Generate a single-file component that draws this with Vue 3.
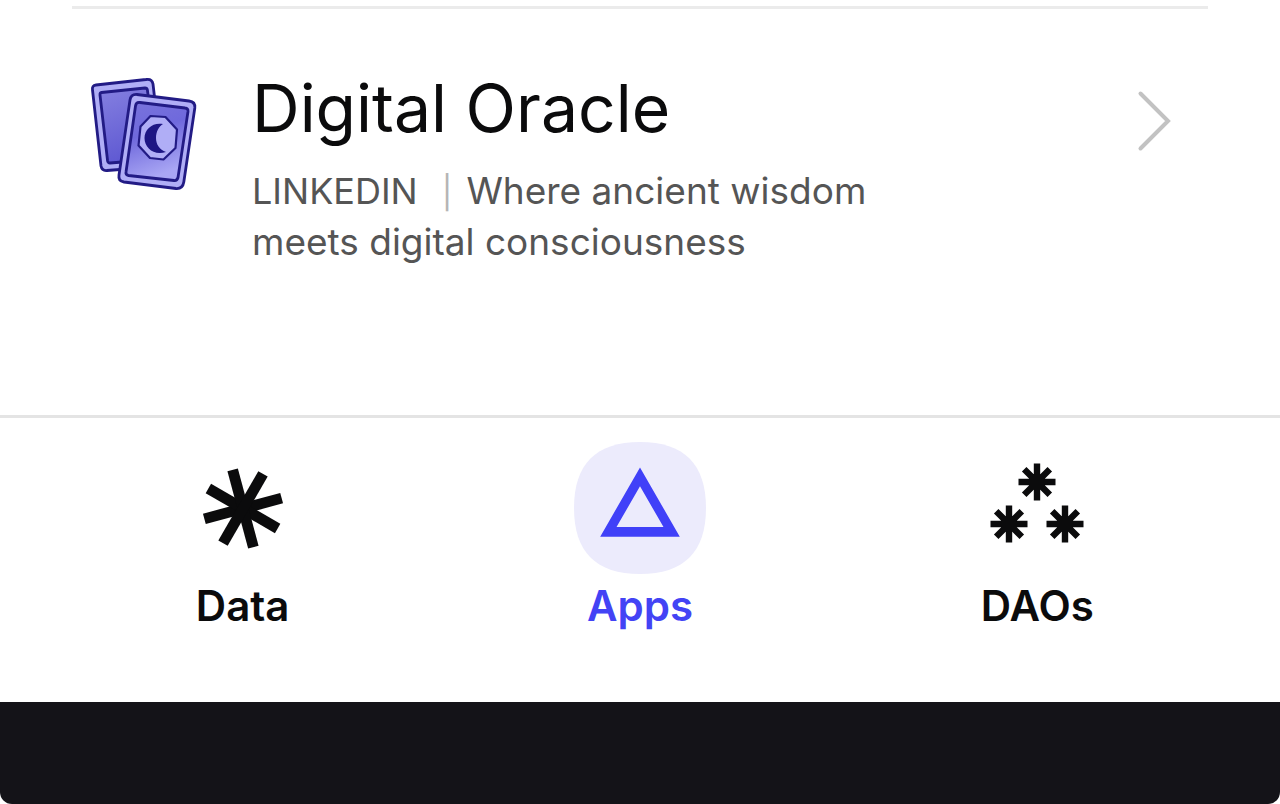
<script setup>
const tabs = [
  { id: 'data', label: 'Data' },
  { id: 'apps', label: 'Apps' },
  { id: 'daos', label: 'DAOs' },
]
const active = 'apps'
const clusters = [
  [66, 40],
  [38, 82],
  [94, 82],
]
</script>

<template>
  <div class="screen">
    <main class="list">
      <a class="app" href="#digital-oracle">
        <svg class="art" viewBox="0 0 130 130" aria-hidden="true">
          <defs>
            <linearGradient id="cardFill" x1="0" y1="0" x2="0.3" y2="1">
              <stop offset="0" stop-color="#7a74dc" />
              <stop offset="0.45" stop-color="#6f69dc" />
              <stop offset="1" stop-color="#a9a6f4" />
            </linearGradient>
            <linearGradient id="backFill" x1="0" y1="0" x2="0.3" y2="1">
              <stop offset="0" stop-color="#8580e0" />
              <stop offset="1" stop-color="#5f59d2" />
            </linearGradient>
          </defs>
          <g stroke="#221b85" stroke-width="2.8" stroke-linejoin="round">
            <path fill="#b0aef6" d="M16 15 L66 9.500 Q72 8.600 73 14 L82 92 Q82.400 96 78.500 96.500 L27 100.500 Q22 101 21 96 L12.500 20 Q11.800 15.500 16 15Z" />
            <path fill="url(#backFill)" d="M21.500 22.500 L65 18 Q67 18 67.400 20 L76 87 Q76 89 74 89.500 L30 93 Q28 93 27.600 91 L20 25 Q19.800 22.800 21.500 22.500Z" />
            <path fill="#b0aef6" d="M57 24.500 L109 31 Q115.500 31.800 114.800 38 L103.800 112 Q102.700 119 96 118.500 L44 112 Q38 111 39 105 L50 30 Q51 24 57 24.500Z" />
            <path fill="url(#cardFill)" d="M60 32.500 L105 38 Q108.300 38.300 108 41.500 L98 107.500 Q97 111 94 110.500 L48.500 105.500 Q45.500 105 46 102 L55.500 36 Q56 32 60 32.500Z" />
            <path fill="#b0aef6" stroke-width="2.200" d="M70.500 46 L85.500 47 L97 59.500 L95.500 78 L83.500 89.500 L70 88 L58.500 75.500 L60.500 56.500Z" />
          </g>
          <path fill="#1d1684" d="M83 54 C73 52 64.500 59 64.500 68 C64.500 78 74 86 86 82 C79.500 79.500 76 74.500 76 68 C76 61.500 79 56.500 83 54Z" />
        </svg>
        <div class="copy">
          <h2 class="title">Digital Oracle</h2>
          <p class="desc">
            <span class="source">LINKEDIN</span><span class="bar">|</span>Where ancient wisdom meets digital consciousness
          </p>
        </div>
        <svg class="chevron" viewBox="0 0 36 64" aria-hidden="true">
          <path d="M4.500 4.500 L32 32 L4.500 59.500" />
        </svg>
      </a>
    </main>

    <nav class="tabs" aria-label="Main">
      <a
        v-for="tab in tabs"
        :key="tab.id"
        :href="'#' + tab.id"
        class="tab"
        :class="{ active: tab.id === active }"
        :aria-current="tab.id === active ? 'page' : undefined"
      >
        <svg class="icon" viewBox="0 0 132 132" aria-hidden="true">
          <g v-if="tab.id === 'data'" class="rays" transform="translate(66 66.500) rotate(-15)" stroke-width="10.800">
            <path d="M-40 0H40" />
            <path d="M-40 0H40" transform="rotate(45)" />
            <path d="M0 -40V40" />
            <path d="M-40 0H40" transform="rotate(135)" />
          </g>
          <template v-else-if="tab.id === 'apps'">
            <path class="blob" d="M66 0C110 0 132 22 132 66S110 132 66 132S0 110 0 66S22 0 66 0Z" />
            <path class="triangle" fill-rule="evenodd" d="M66 25.500L105.800 94.700H26.200ZM66 44.300L42.500 85H89.500Z" />
          </template>
          <template v-else>
            <g v-for="(c, i) in clusters" :key="i" class="rays" :transform="`translate(${c[0]} ${c[1]})`" stroke-width="6.400">
              <path d="M-18.500 0H18.500M0 -18.500V18.500M-12.800 -12.800L12.800 12.800M-12.800 12.800L12.800 -12.800" />
            </g>
          </template>
        </svg>
        <span class="label">{{ tab.label }}</span>
      </a>
    </nav>

    <footer class="dock"></footer>
  </div>
</template>

<style>
body {
  background: #fff;
}
</style>

<style scoped>
.screen {
  display: flex;
  flex-direction: column;
  min-height: 100vh;
  font-family: Inter, "Liberation Sans", sans-serif;
  color: #0b0b0c;
  background: #fff;
}
a {
  color: inherit;
  text-decoration: none;
}
.list {
  flex: 1;
  padding: 6px 72px 0;
}
.app {
  display: flex;
  align-items: flex-start;
  padding: 60px 36px 0 8px;
  border-top: 3px solid #ebebeb;
}
.art {
  flex: none;
  width: 130px;
  height: 130px;
  margin-top: 1px;
}
.copy {
  flex: 1;
  margin-left: 42px;
}
.title {
  margin: 0;
  font-size: 66px;
  line-height: 78px;
  font-weight: 400;
}
.desc {
  max-width: 680px;
  margin: 18px 0 0;
  font-size: 37px;
  line-height: 51px;
  color: #555;
}
.source {
  font-size: 36px;
  line-height: 36px;
}
.bar {
  margin: 0 14px 0 24px;
  font-size: 32px;
  line-height: 32px;
  color: #b5b5b5;
}
.chevron {
  flex: none;
  width: 36px;
  height: 64px;
  margin-top: 20px;
  fill: none;
  stroke: #c2c2c2;
  stroke-width: 4;
  stroke-linecap: round;
}
.tabs {
  display: grid;
  grid-template-columns: repeat(3, 1fr);
  padding: 24px 44px 70px;
  border-top: 3px solid #e4e4e4;
}
.tab {
  display: flex;
  flex-direction: column;
  align-items: center;
}
.icon {
  width: 132px;
  height: 132px;
}
.rays {
  stroke: #0b0b0c;
}
.blob {
  fill: #ecebfc;
}
.triangle {
  fill: #4040f8;
}
.label {
  margin-top: 6px;
  font-size: 42px;
  line-height: 52px;
  font-weight: 600;
}
.active {
  color: #4343f5;
}
.dock {
  height: 102px;
  background: #141318;
  border-radius: 0 0 12px 12px;
}
</style>
